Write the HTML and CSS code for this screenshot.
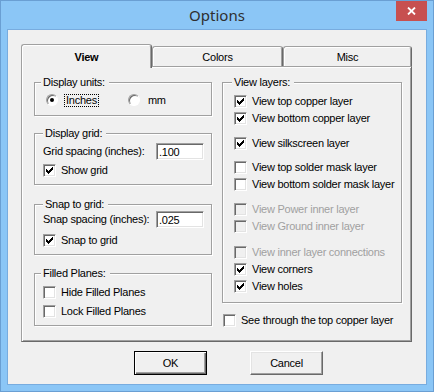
FILE: index.html
```html
<!DOCTYPE html>
<html>
<head>
<meta charset="utf-8">
<link rel="stylesheet" href="styles.css">
</head>
<body>
<div class="window">
  <div class="titlebar">
    <div class="title">Options</div>
    <div class="close">
      <svg width="9" height="8" viewBox="0 0 9 8"><path d="M1 0.5L8 7.5M8 0.5L1 7.5" stroke="#fff" stroke-width="1.8"/></svg>
    </div>
  </div>
  <div class="client">
    <div class="tabs">
      <div class="tab view">View</div>
      <div class="tab colors">Colors</div>
      <div class="tab misc">Misc</div>
    </div>
    <div class="panel">
      <div class="col-left">
        <div class="group g-units">
          <div class="legend lg-tight">Display units:</div>
          <div class="radio-row">
            <span class="radio on"></span>
            <span class="focus">Inches</span>
            <span class="radio second"></span>
            <span class="rlabel">mm</span>
          </div>
        </div>
        <div class="group g-grid">
          <div class="legend">Display grid:</div>
          <div class="field-row">
            <span class="flabel">Grid spacing (inches):</span>
            <input class="edit" type="text" value=".100">
          </div>
          <div class="chk-row first"><span class="chk on"><svg width="11" height="11" viewBox="0 0 11 11"><path d="M2 4h1v3h-1zM3 5h1v3h-1zM4 6h1v3h-1zM5 5h1v3h-1zM6 4h1v3h-1zM7 3h1v3h-1zM8 2h1v3h-1z" fill="#000"/></svg></span><span>Show grid</span></div>
        </div>
        <div class="group g-snap">
          <div class="legend">Snap to grid:</div>
          <div class="field-row tight">
            <span class="flabel">Snap spacing (inches):</span>
            <input class="edit" type="text" value=".025">
          </div>
          <div class="chk-row"><span class="chk on"><svg width="11" height="11" viewBox="0 0 11 11"><path d="M2 4h1v3h-1zM3 5h1v3h-1zM4 6h1v3h-1zM5 5h1v3h-1zM6 4h1v3h-1zM7 3h1v3h-1zM8 2h1v3h-1z" fill="#000"/></svg></span><span>Snap to grid</span></div>
        </div>
        <div class="group g-planes">
          <div class="legend lg-tight">Filled Planes:</div>
          <div class="chk-row"><span class="chk"></span><span>Hide Filled Planes</span></div>
          <div class="chk-row"><span class="chk"></span><span>Lock Filled Planes</span></div>
        </div>
      </div>
      <div class="col-right">
        <div class="group g-layers">
          <div class="legend lg-tight">View layers:</div>
          <div class="lrow r1"><span class="chk on"><svg width="11" height="11" viewBox="0 0 11 11"><path d="M2 4h1v3h-1zM3 5h1v3h-1zM4 6h1v3h-1zM5 5h1v3h-1zM6 4h1v3h-1zM7 3h1v3h-1zM8 2h1v3h-1z" fill="#000"/></svg></span><span>View top copper layer</span></div>
          <div class="lrow"><span class="chk on"><svg width="11" height="11" viewBox="0 0 11 11"><path d="M2 4h1v3h-1zM3 5h1v3h-1zM4 6h1v3h-1zM5 5h1v3h-1zM6 4h1v3h-1zM7 3h1v3h-1zM8 2h1v3h-1z" fill="#000"/></svg></span><span>View bottom copper layer</span></div>
          <div class="lrow gap8"><span class="chk on"><svg width="11" height="11" viewBox="0 0 11 11"><path d="M2 4h1v3h-1zM3 5h1v3h-1zM4 6h1v3h-1zM5 5h1v3h-1zM6 4h1v3h-1zM7 3h1v3h-1zM8 2h1v3h-1z" fill="#000"/></svg></span><span>View silkscreen layer</span></div>
          <div class="lrow gap7"><span class="chk"></span><span>View top solder mask layer</span></div>
          <div class="lrow"><span class="chk"></span><span>View bottom solder mask layer</span></div>
          <div class="lrow gap8 disabled"><span class="chk"></span><span>View Power inner layer</span></div>
          <div class="lrow disabled"><span class="chk"></span><span>View Ground inner layer</span></div>
          <div class="lrow gap9 disabled"><span class="chk"></span><span>View inner layer connections</span></div>
          <div class="lrow"><span class="chk on"><svg width="11" height="11" viewBox="0 0 11 11"><path d="M2 4h1v3h-1zM3 5h1v3h-1zM4 6h1v3h-1zM5 5h1v3h-1zM6 4h1v3h-1zM7 3h1v3h-1zM8 2h1v3h-1z" fill="#000"/></svg></span><span>View corners</span></div>
          <div class="lrow"><span class="chk on"><svg width="11" height="11" viewBox="0 0 11 11"><path d="M2 4h1v3h-1zM3 5h1v3h-1zM4 6h1v3h-1zM5 5h1v3h-1zM6 4h1v3h-1zM7 3h1v3h-1zM8 2h1v3h-1z" fill="#000"/></svg></span><span>View holes</span></div>
        </div>
        <div class="chk-row seethrough"><span class="chk"></span><span>See through the top copper layer</span></div>
      </div>
    </div>
    <div class="buttons">
      <div class="btn default">OK</div>
      <div class="btn">Cancel</div>
    </div>
  </div>
</div>
</body>
</html>
```

FILE: styles.css
```css
* { box-sizing: border-box; }

body {
  margin: 0;
  font-family: "Liberation Sans", Arial, sans-serif;
  font-size: 11px;
  letter-spacing: -0.25px;
  color: #000;
}

.window {
  width: 434px;
  height: 392px;
  background: #8bc6f6;
  border: 1px solid #6a9fd3;
  padding: 0 6px 6px;
  display: flex;
  flex-direction: column;
}

.titlebar {
  height: 28px;
  flex: none;
  display: grid;
  grid-template-columns: 1fr auto 1fr;
}

.title {
  grid-column: 2;
  font-family: "Noto Sans", "Open Sans", sans-serif;
  font-size: 15px;
  letter-spacing: 0;
  line-height: 28px;
  color: #2f2f2f;
}

.close {
  grid-column: 3;
  justify-self: end;
  align-self: start;
  width: 31px;
  height: 20px;
  background: #c75050;
  display: flex;
  align-items: center;
  justify-content: center;
}

.close svg { display: block; }

.client {
  flex: 1;
  background: #f0f0f0;
  border: 1px solid #78acdf;
  padding: 14px 0 0 13px;
}

.tabs {
  display: flex;
  align-items: flex-end;
  height: 22px;
  width: 391px;
}

.tab {
  height: 20px;
  background: #f0f0f0;
  border: 1px solid #a0a0a0;
  border-right-color: #696969;
  border-bottom: 0;
  border-radius: 3px 3px 0 0;
  box-shadow: inset 1px 1px #fff, inset -1px 0 #a0a0a0;
  text-align: center;
  line-height: 13px;
  padding-top: 4px;
}

.tab.view {
  width: 131px;
  height: 24px;
  margin-bottom: -2px;
  padding-top: 6px;
  font-weight: bold;
  position: relative;
  z-index: 1;
}

.tab.colors { width: 131px; }
.tab.misc { width: 129px; }

.panel {
  width: 391px;
  height: 276px;
  border: 1px solid;
  border-color: #a0a0a0 #696969 #696969 #a0a0a0;
  box-shadow: inset 1px 1px #fff, inset -1px -1px #a0a0a0;
  display: grid;
  grid-template-columns: 178px 180px;
  column-gap: 10px;
  align-items: start;
  padding: 15px 0 0 12px;
}

.col-left, .col-right {
  display: flex;
  flex-direction: column;
}

.group {
  border: 1px solid #a0a0a0;
  box-shadow: inset 1px 1px #fff, 1px 1px #fff;
  padding: 0 0 7px 8px;
}

.legend {
  width: fit-content;
  margin-top: -7px;
  line-height: 13px;
  padding: 0 4px 0 2px;
  background: #f0f0f0;
}

.legend.lg-tight { margin-left: -2px; }

.g-units { padding-bottom: 8px; }
.g-grid { margin-top: 17px; }
.g-snap { margin-top: 19px; }
.g-planes { margin-top: 18px; }
.g-layers { padding: 0 0 7px 11px; }

.radio-row {
  display: flex;
  align-items: center;
  height: 14px;
  margin-top: 4px;
}

.radio {
  width: 12px;
  height: 12px;
  flex: none;
  border-radius: 50%;
  border: 1px solid;
  border-color: #a0a0a0 #fff #fff #a0a0a0;
  box-shadow: inset 1px 1px #696969;
  background: #fff;
  margin-left: 3px;
  display: flex;
  align-items: center;
  justify-content: center;
}

.radio.on::after {
  content: "";
  width: 4px;
  height: 4px;
  border-radius: 50%;
  background: #000;
}

.radio.second { margin-left: 29px; }

.focus {
  margin-left: 6px;
  border: 1px dotted #000;
  padding: 0 1px;
  line-height: 11px;
}

.rlabel { margin-left: 8px; line-height: 13px; }

.field-row {
  display: flex;
  align-items: center;
  margin-top: 3px;
  height: 17px;
}

.field-row.tight { margin-top: 0; }

.flabel {
  width: 113px;
  flex: none;
  white-space: nowrap;
  line-height: 13px;
}

.edit {
  width: 48px;
  height: 17px;
  margin: 0;
  padding: 0 2px;
  font: inherit;
  letter-spacing: inherit;
  color: #000;
  background: #fff;
  border: 1px solid;
  border-color: #a0a0a0 #fff #fff #a0a0a0;
  box-shadow: inset 1px 1px #696969, inset -1px -1px #e3e3e3;
  outline: none;
}

.chk-row {
  display: flex;
  align-items: center;
  gap: 5px;
  height: 13px;
  margin-top: 6px;
  line-height: 13px;
  white-space: nowrap;
}

.chk-row.first { margin-top: 4px; }

.chk {
  width: 13px;
  height: 13px;
  flex: none;
  border: 1px solid;
  border-color: #a0a0a0 #fff #fff #a0a0a0;
  box-shadow: inset 1px 1px #696969, inset -1px -1px #e3e3e3;
  background: #fff;
}

.chk svg { display: block; shape-rendering: crispEdges; }

.lrow {
  display: flex;
  align-items: center;
  gap: 5px;
  height: 17px;
  line-height: 13px;
  white-space: nowrap;
}

.lrow.r1 { margin-top: 4px; }
.lrow.gap7 { margin-top: 7px; }
.lrow.gap8 { margin-top: 8px; }
.lrow.gap9 { margin-top: 9px; }

.disabled { color: #a0a0a0; }
.disabled .chk { background: #f0f0f0; }

.seethrough {
  margin-top: 10px;
  margin-left: 1px;
  height: 14px;
}

.buttons {
  display: flex;
  gap: 43px;
  margin-top: 9px;
  padding-left: 113px;
}

.btn {
  width: 73px;
  height: 24px;
  background: #f0f0f0;
  border: 1px solid;
  border-color: #fff #696969 #696969 #fff;
  box-shadow: inset -1px -1px #a0a0a0, inset 1px 1px #e3e3e3;
  display: flex;
  align-items: center;
  justify-content: center;
  line-height: 13px;
}

.btn.default {
  border-color: #000;
  box-shadow: inset 1px 1px #fff, inset -1px -1px #696969, inset -2px -2px #a0a0a0;
}
```
